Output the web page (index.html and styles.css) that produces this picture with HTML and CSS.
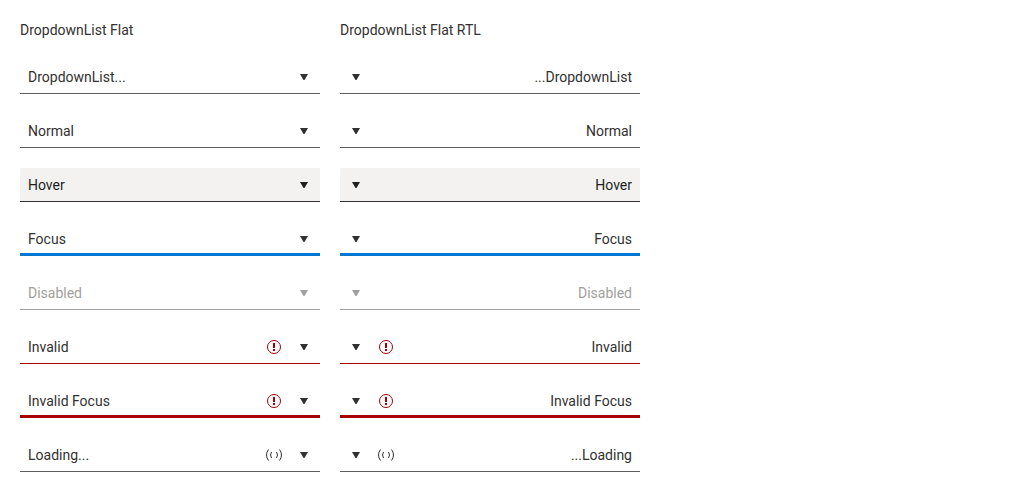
FILE: index.html
```html
<!DOCTYPE html>
<html lang="en">
<head>
<meta charset="utf-8">
<meta name="viewport" content="width=device-width, initial-scale=1">
<title>DropdownList Flat</title>
<link rel="stylesheet" href="styles.css">
</head>
<body>
<svg class="sprite" aria-hidden="true">
  <symbol id="caret" viewBox="0 0 16 16"><path d="M4 5h8l-3.5 6h-1z" fill="currentColor"/></symbol>
  <symbol id="warning" viewBox="0 0 16 16"><circle cx="8" cy="8" r="6.5" fill="none" stroke="currentColor"/><path d="M7 4h2v5H7zM7 10h2v2H7z" fill="currentColor"/></symbol>
  <symbol id="loading" viewBox="0 0 16 16"><path d="M2.5 2.5Q-1.5 8 2.5 13.5M13.5 2.5Q17.500 8 13.500 13.500M5.500 5Q3.500 8 5.500 11M10.500 5Q12.500 8 10.500 11" fill="none" stroke="currentColor"/></symbol>
</svg>
<main class="columns">
  <section class="column">
    <h2 class="title" id="ltr">DropdownList Flat</h2>
    <div class="picker"><select class="value" aria-labelledby="ltr"><option>DropdownList...</option></select><span class="icons"><svg class="icon"><use href="#caret"/></svg></span></div>
    <div class="picker"><select class="value" aria-labelledby="ltr"><option>Normal</option></select><span class="icons"><svg class="icon"><use href="#caret"/></svg></span></div>
    <div class="picker hover"><select class="value" aria-labelledby="ltr"><option>Hover</option></select><span class="icons"><svg class="icon"><use href="#caret"/></svg></span></div>
    <div class="picker focus"><select class="value" aria-labelledby="ltr"><option>Focus</option></select><span class="icons"><svg class="icon"><use href="#caret"/></svg></span></div>
    <div class="picker disabled"><select class="value" aria-labelledby="ltr" disabled><option>Disabled</option></select><span class="icons"><svg class="icon"><use href="#caret"/></svg></span></div>
    <div class="picker invalid"><select class="value" aria-labelledby="ltr" aria-invalid="true"><option>Invalid</option></select><span class="icons"><svg class="icon error"><use href="#warning"/></svg><svg class="icon"><use href="#caret"/></svg></span></div>
    <div class="picker invalid focus"><select class="value" aria-labelledby="ltr" aria-invalid="true"><option>Invalid Focus</option></select><span class="icons"><svg class="icon error"><use href="#warning"/></svg><svg class="icon"><use href="#caret"/></svg></span></div>
    <div class="picker"><select class="value" aria-labelledby="ltr" aria-busy="true"><option>Loading...</option></select><span class="icons"><svg class="icon"><use href="#loading"/></svg><svg class="icon"><use href="#caret"/></svg></span></div>
  </section>
  <section class="column">
    <h2 class="title" id="rtl">DropdownList Flat RTL</h2>
    <div class="picker" dir="rtl"><select class="value" aria-labelledby="rtl"><option>DropdownList...</option></select><span class="icons"><svg class="icon"><use href="#caret"/></svg></span></div>
    <div class="picker" dir="rtl"><select class="value" aria-labelledby="rtl"><option>Normal</option></select><span class="icons"><svg class="icon"><use href="#caret"/></svg></span></div>
    <div class="picker hover" dir="rtl"><select class="value" aria-labelledby="rtl"><option>Hover</option></select><span class="icons"><svg class="icon"><use href="#caret"/></svg></span></div>
    <div class="picker focus" dir="rtl"><select class="value" aria-labelledby="rtl"><option>Focus</option></select><span class="icons"><svg class="icon"><use href="#caret"/></svg></span></div>
    <div class="picker disabled" dir="rtl"><select class="value" aria-labelledby="rtl" disabled><option>Disabled</option></select><span class="icons"><svg class="icon"><use href="#caret"/></svg></span></div>
    <div class="picker invalid" dir="rtl"><select class="value" aria-labelledby="rtl" aria-invalid="true"><option>Invalid</option></select><span class="icons"><svg class="icon error"><use href="#warning"/></svg><svg class="icon"><use href="#caret"/></svg></span></div>
    <div class="picker invalid focus" dir="rtl"><select class="value" aria-labelledby="rtl" aria-invalid="true"><option>Invalid Focus</option></select><span class="icons"><svg class="icon error"><use href="#warning"/></svg><svg class="icon"><use href="#caret"/></svg></span></div>
    <div class="picker" dir="rtl"><select class="value" aria-labelledby="rtl" aria-busy="true"><option>Loading...</option></select><span class="icons"><svg class="icon"><use href="#loading"/></svg><svg class="icon"><use href="#caret"/></svg></span></div>
  </section>
</main>
</body>
</html>
```
FILE: styles.css
```css
* {
  box-sizing: border-box;
}

body {
  margin: 0;
  padding: 20px;
  background: #fff;
  color: #323130;
  font: 14px/20px Roboto, sans-serif;
}

.sprite {
  display: none;
}

.columns {
  display: grid;
  grid-template-columns: 1fr 1fr;
  gap: 20px;
  max-width: 620px;
}

.column {
  display: grid;
  gap: 20px;
}

.title {
  margin: 0;
  font: inherit;
}

.picker {
  --line: #605e5c;
  --line-size: 1px;
  display: grid;
  align-items: center;
  border-radius: 2px 2px 0 0;
  box-shadow: inset 0 calc(-1 * var(--line-size)) var(--line);
}

.value,
.icons {
  grid-area: 1 / 1;
}

.value {
  appearance: none;
  width: 100%;
  margin: 0;
  padding: 7px 8px;
  border: 0;
  outline: 0;
  background: none;
  color: inherit;
  font: inherit;
  opacity: 1;
}

.icons {
  display: flex;
  justify-self: end;
  gap: 14px;
  padding: 0 8px;
  pointer-events: none;
}

.icon {
  width: 16px;
  height: 16px;
  overflow: visible;
}

.hover {
  --line: #323130;
  background: #f3f2f1;
  color: #201f1e;
}

.focus {
  --line: #0078d4;
  --line-size: 3px;
  border-radius: 0;
}

.disabled {
  --line: #a19f9d;
  color: #a19f9d;
}

.invalid {
  --line: #a80000;
}

.error {
  color: #a80000;
}
```
